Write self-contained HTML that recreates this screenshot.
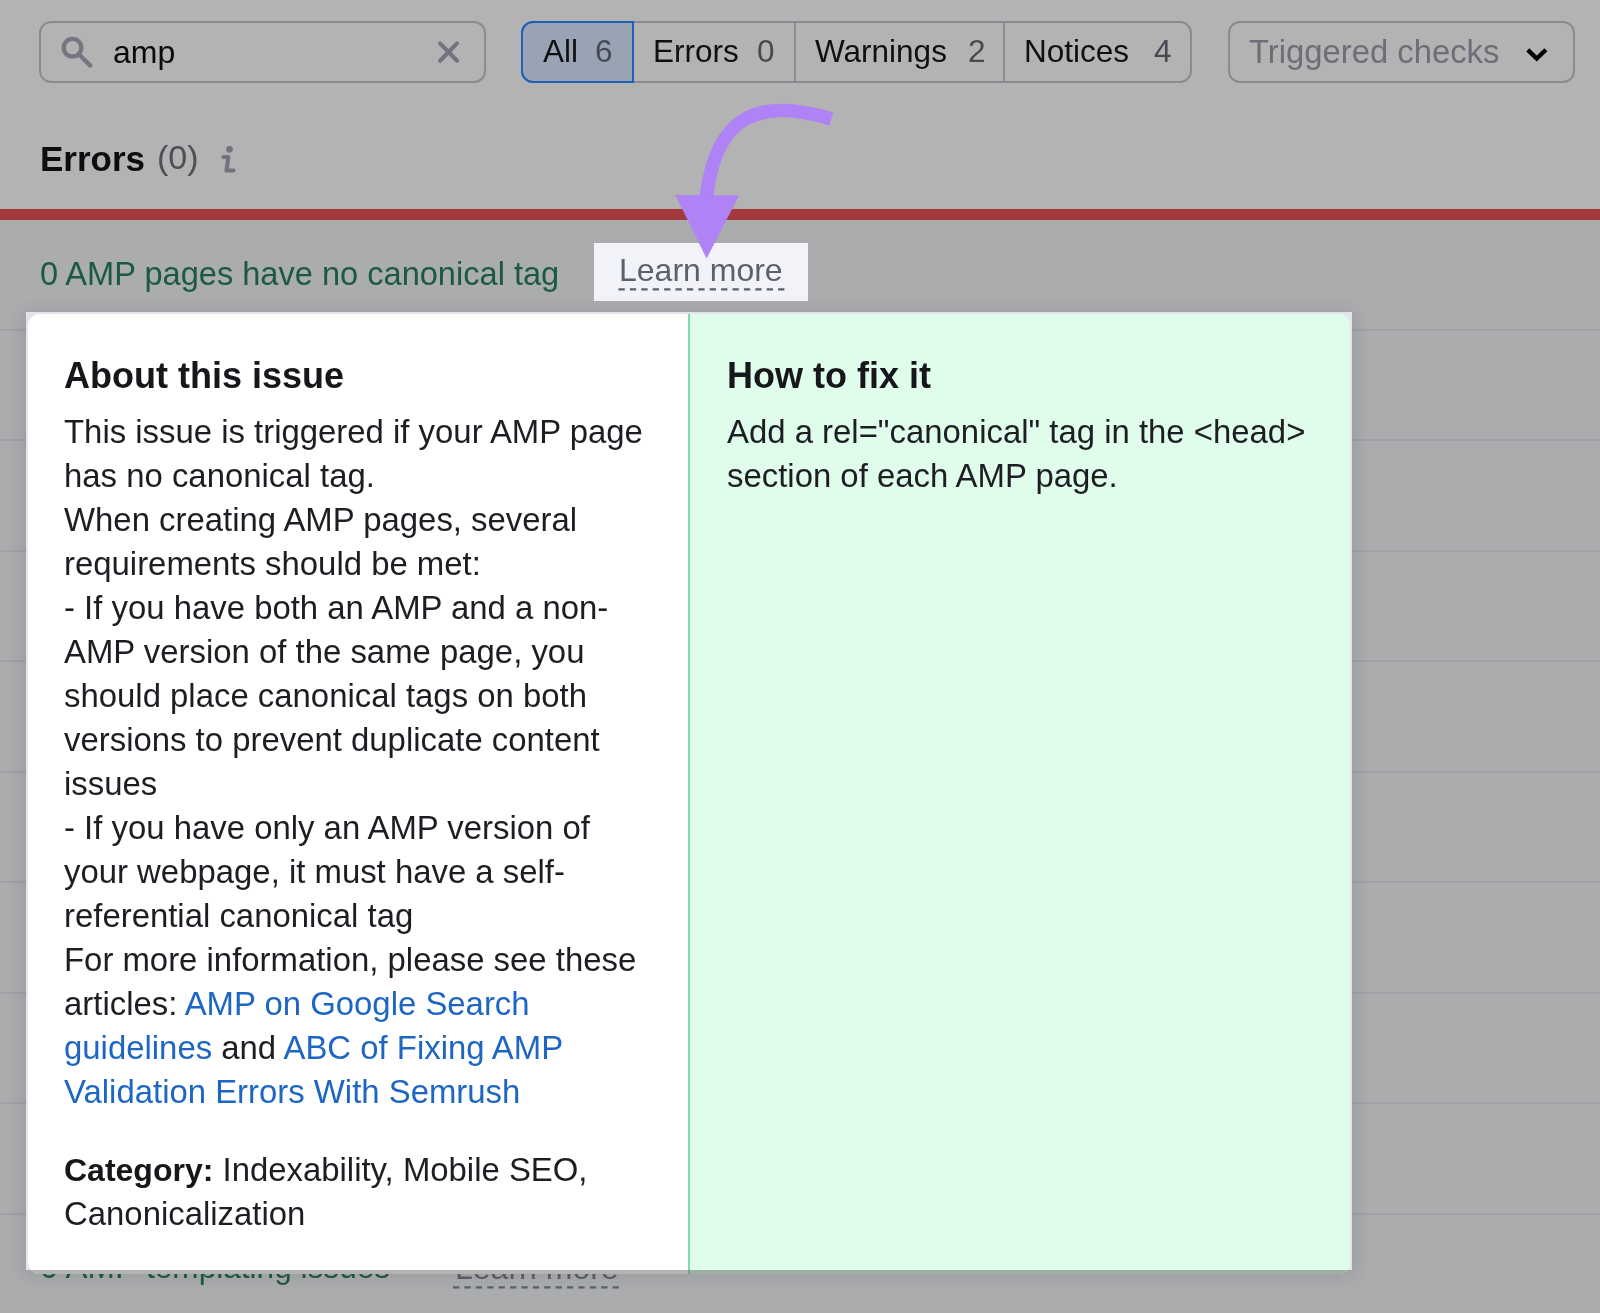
<!DOCTYPE html>
<html><head><meta charset="utf-8">
<style>
html,body{margin:0;padding:0;}
body{width:1600px;height:1313px;overflow:hidden;position:relative;background:#b3b3b3;font-family:"Liberation Sans",sans-serif;}
.abs{position:absolute;}
.t{position:absolute;white-space:nowrap;line-height:1;}
#lower{left:0;top:220px;width:1600px;height:1093px;background:#abacae;}
#redline{left:0;top:209px;width:1600px;height:11px;background:#a3393d;}
.rowline{position:absolute;left:0;width:1600px;height:2px;background:#a1a1a5;}
#search{left:39px;top:21px;width:443px;height:58px;border:2px solid #898b92;border-radius:12px;}
#tabs{left:521px;top:21px;width:667px;height:58px;border:2px solid #898b92;border-radius:12px;}
#alltab{left:521px;top:21px;width:109px;height:58px;border:2px solid #1d60b4;border-radius:12px 0 0 12px;background:#98a3b3;}
.div{position:absolute;top:23px;width:2px;height:58px;background:#898b92;}
#drop{left:1228px;top:21px;width:343px;height:58px;border:2px solid #898b92;border-radius:12px;}
.tab{font-size:31.5px;color:#0f1012;}
.cnt{font-size:31.5px;color:#484a52;}
#popup{left:26px;top:312px;width:1326px;height:958px;background:#e3e4ec;box-shadow:0 3px 18px rgba(30,30,40,0.16);}
#card{left:28px;top:314px;width:1322px;height:960px;background:#fff;border-radius:12px;overflow:hidden;}
#green{left:688px;top:314px;width:662px;height:960px;background:#e0fcea;border-left:2px solid #80dba8;border-radius:0 12px 12px 0;box-sizing:border-box;}
.body{font-size:32.9px;color:#1d1e23;}
.body b{font-size:32px;color:#16171b;}
.h{font-size:36px;font-weight:bold;color:#16171b;}
.link{color:#1d66c4;}
</style></head>
<body><div style="position:absolute;left:0;top:0;width:1600px;height:1313px;will-change:transform">
<div id="lower" class="abs"></div>
<div id="redline" class="abs"></div>
<div class="rowline" style="top:329px"></div>
<div class="rowline" style="top:439px"></div>
<div class="rowline" style="top:550px"></div>
<div class="rowline" style="top:660px"></div>
<div class="rowline" style="top:771px"></div>
<div class="rowline" style="top:881px"></div>
<div class="rowline" style="top:992px"></div>
<div class="rowline" style="top:1102px"></div>
<div class="rowline" style="top:1213px"></div>

<!-- top controls -->
<div id="search" class="abs"></div>
<div id="tabs" class="abs"></div>
<div id="alltab" class="abs"></div>
<div class="div" style="left:794px"></div>
<div class="div" style="left:1003px"></div>
<div id="drop" class="abs"></div>

<div class="t" style="left:113px;top:36px;font-size:32px;color:#0a0a0c">amp</div>
<div class="t tab" style="left:543px;top:36px">All</div>
<div class="t cnt" style="left:595px;top:36px">6</div>
<div class="t tab" style="left:653px;top:36px">Errors</div>
<div class="t cnt" style="left:757px;top:36px">0</div>
<div class="t tab" style="left:815px;top:36px">Warnings</div>
<div class="t cnt" style="left:968px;top:36px">2</div>
<div class="t tab" style="left:1024px;top:36px">Notices</div>
<div class="t cnt" style="left:1154px;top:36px">4</div>
<div class="t" style="left:1249px;top:36px;font-size:32.8px;color:#6c6f77">Triggered checks</div>

<div class="t" style="left:40px;top:141px;font-size:35px;font-weight:bold;color:#0c0d10">Errors</div>
<div class="t" style="left:157px;top:140px;font-size:34px;color:#4d4f57">(0)</div>

<div class="t" style="left:40px;top:258px;font-size:32.6px;color:#1b5a40">0 AMP pages have no canonical tag</div>
<div class="abs" style="left:594px;top:243px;width:214px;height:58px;background:#f2f3f8"></div>
<div class="t" style="left:619px;top:254px;font-size:32px;color:#5c5f6c">Learn more</div>


<svg class="abs" style="left:0;top:0" width="1600" height="320" viewBox="0 0 1600 320">
 <g fill="none" stroke-linecap="round" stroke-linejoin="round">
  <circle cx="72.5" cy="47.7" r="8.8" stroke="#74777f" stroke-width="4.3"/>
  <line x1="79" y1="54.5" x2="90.3" y2="65.6" stroke="#74777f" stroke-width="4.3"/>
  <line x1="440.1" y1="43.4" x2="457" y2="60.8" stroke="#72757d" stroke-width="4.2"/>
  <line x1="457" y1="43.4" x2="440.1" y2="60.8" stroke="#72757d" stroke-width="4.2"/>
  <polyline points="1527.8,49.9 1536.7,58.6 1545.9,49.7" stroke="#000" stroke-width="4.3" stroke-linecap="butt" stroke-linejoin="miter"/>
  <circle cx="229.5" cy="149.3" r="3.4" fill="#71747c" stroke="none"/>
  <polyline points="223.4,157 228.3,157 226.5,170.5 233.5,170.5" stroke="#71747c" stroke-width="4.2"/>
 </g>
 <line x1="618.5" y1="289.4" x2="785" y2="289.4" stroke="#5c5f6c" stroke-width="2.4" stroke-dasharray="6.3 5.1"/>
</svg>


<div class="t" style="left:40px;top:1251.2px;font-size:32.9px;color:#1b5a40">0 AMP -</div><div class="t" style="left:146px;top:1252.3px;font-size:31.6px;color:#1b5a40">templating issues</div>
<svg class="abs" style="left:0;top:1270px" width="1600" height="43" viewBox="0 1270 1600 43">
 <line x1="453" y1="1287.4" x2="620" y2="1287.4" stroke="#5c5f6c" stroke-width="2.4" stroke-dasharray="6.3 5.1"/>
</svg>
<div class="t" style="left:455px;top:1251.9px;font-size:32px;color:#5c5f6c">Learn more</div>

<!-- popup -->
<div id="popup" class="abs"></div>
<div id="card" class="abs"></div>
<div id="green" class="abs"></div>
<div class="abs" style="left:26px;top:1270px;width:1326px;height:4px;overflow:hidden">
 <div class="abs" style="left:2px;top:-956px;width:1322px;height:960px;border-radius:12px;background:#b3b3b3;overflow:hidden">
  <div class="abs" style="left:660px;top:0;width:662px;height:960px;background:#9db0a4;border-left:2px solid #7aa08a;box-sizing:border-box"></div>
 </div>
</div>

<div class="h t" style="left:64px;top:358.4px">About this issue</div>
<div class="body abs" style="left:64px;top:409.7px;line-height:44px;white-space:nowrap">This issue is triggered if your AMP page<br>has no canonical tag.<br>When creating AMP pages, several<br>requirements should be met:<br>- If you have both an AMP and a non-<br>AMP version of the same page, you<br>should place canonical tags on both<br>versions to prevent duplicate content<br>issues<br>- If you have only an AMP version of<br>your webpage, it must have a self-<br>referential canonical tag<br>For more information, please see these<br>articles: <span class="link">AMP on Google Search</span><br><span class="link">guidelines</span> and <span class="link">ABC of Fixing AMP</span><br><span class="link">Validation Errors With Semrush</span></div>
<div class="body abs" style="left:64px;top:1148px;line-height:44px;white-space:nowrap"><b>Category:</b> Indexability, Mobile SEO,<br>Canonicalization</div>
<div class="h t" style="left:727px;top:358.4px">How to fix it</div>
<div class="body abs" style="left:727px;top:409.7px;line-height:44px;white-space:nowrap">Add a rel="canonical" tag in the &lt;head&gt;<br>section of each AMP page.</div>

<svg class="abs" style="left:0;top:0" width="1600" height="320" viewBox="0 0 1600 320">
 <path d="M831.3,119 C758,97 716,116 706.5,196" fill="none" stroke="#af82f5" stroke-width="13.5"/>
 <polygon points="675.3,195 739,195.5 706.6,258.5" fill="#af82f5"/>
</svg>
</div></body></html>
